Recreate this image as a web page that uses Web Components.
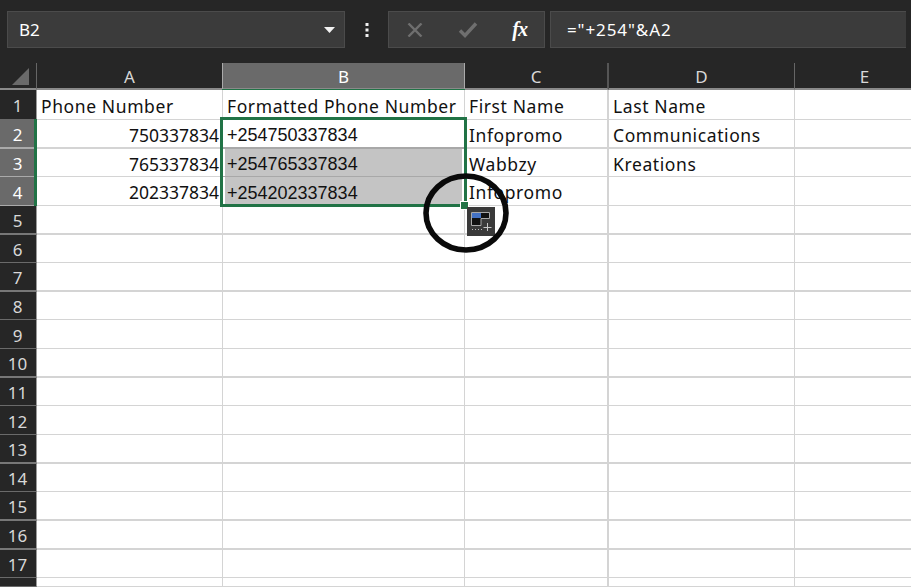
<!DOCTYPE html>
<html>
<head>
<meta charset="utf-8">
<style>
html, body { margin: 0; height: 100%; overflow: hidden; background: #262626; }
body { display: flex; flex-direction: column; width: 911px; height: 587px; }
</style>
</head>
<body>
<xl-formula-bar cell="B2" formula='="+254"&amp;A2'></xl-formula-bar>
<xl-sheet></xl-sheet>
<script>
class XlFormulaBar extends HTMLElement {
    static get localStyles() {
        return `
        <style>
        :host {
            display: grid;
            grid-template-columns: 338px 43px 157px 361px;
            height: 63px;
            box-sizing: border-box;
            padding: 11px 0 15px 7px;
            background: #262626;
            color: #fff;
            font: 17px "Noto Sans", sans-serif;
        }
        .box {
            display: flex;
            align-items: center;
            box-sizing: border-box;
            background: #3b3b3b;
            border: 1px solid #4b4b4b;
        }
        #name { justify-content: space-between; padding: 0 9px 0 11px; }
        #dots { display: flex; align-items: center; justify-content: center; }
        #buttons { justify-content: space-between; padding: 0 17px 0 18px; }
        #input { margin-left: 5px; padding-left: 16px; border-right: 0; letter-spacing: .9px; }
        #fx { font: italic bold 20px "Liberation Serif", serif; letter-spacing: -1px; }
        svg { display: block; }
        </style>
        `;
    }

    static get html() {
        return `
        <div id="name" class="box">
            <span id="cell"></span>
            <svg width="11" height="6" viewBox="0 0 11 6"><path d="M0 0h11L5.500 6z" fill="#f2f2f2"/></svg>
        </div>
        <div id="dots">
            <svg width="4" height="14" viewBox="0 0 4 14" fill="#f0f0f0"><rect width="3" height="3" x="0.500" y="0"/><rect width="3" height="3" x="0.500" y="5.500"/><rect width="3" height="3" x="0.500" y="11"/></svg>
        </div>
        <div id="buttons" class="box">
            <svg width="16" height="14" viewBox="0 0 16 14" fill="none" stroke="#6f6f6f" stroke-width="2.400"><path d="M1.500 .5l13 13M14.500 .5l-13 13"/></svg>
            <svg width="20" height="16" viewBox="0 0 20 16" fill="none" stroke="#6f6f6f" stroke-width="3.400"><path d="M2 8.500l5 5L18 1.500"/></svg>
            <span id="fx">fx</span>
        </div>
        <div id="input" class="box"><span id="formula"></span></div>
        `;
    }

    constructor() {
        super();
        const template = document.createElement('template');
        template.innerHTML = this.constructor.localStyles
            + this.constructor.html;
        this.attachShadow({ mode: 'open' });
        this.shadowRoot.appendChild(template.content.cloneNode(true));
    }

    connectedCallback() {
        this.shadowRoot.querySelector('#cell').textContent = this.getAttribute('cell');
        this.shadowRoot.querySelector('#formula').textContent = this.getAttribute('formula');
    }
}

class XlSheet extends HTMLElement {
    static get localStyles() {
        return `
        <style>
        :host {
            display: block;
            position: relative;
            flex: 1;
            overflow: hidden;
            background: #fff;
            font: 17.500px "Noto Sans", sans-serif;
            letter-spacing: .6px;
            color: #111;
        }
        #grid {
            display: grid;
            grid-template-columns: 37px 186px 242px 144px 186px 140px;
        }
        .head, .row-head {
            display: flex;
            align-items: center;
            justify-content: center;
            box-sizing: border-box;
            background: #262626;
            color: #d8d8d8;
            font-size: 17px;
            letter-spacing: 0;
        }
        .head { height: 27px; border-right: 1px solid #666; border-bottom: 2px solid #8a8a8a; padding-top: 2px; }
        .head.lit { border-right-color: #aaa; }
        .head.wide { border-right: 2px solid #555; }
        .row-head { border-bottom: 1px solid #6a6a6a; border-right: 1px solid #9a9a9a; padding: 2px 1px 0 0; }
        .on { background: #6a6a6a; color: #fff; }
        .cell {
            box-sizing: border-box;
            display: flex;
            align-items: center;
            padding: 2px 3px 0 4px;
            white-space: nowrap;
            overflow: visible;
            border-right: 1px solid #d4d4d4;
            border-bottom: 1px solid #d4d4d4;
        }
        .thick { border-bottom-width: 2px; }
        .row-head.thick { border-bottom-color: #777; }
        .row-head.on { border-bottom-color: #aaa; }
        .wide { border-right-width: 2px; }
        .num { justify-content: flex-end; letter-spacing: 0; }
        .f { font: 18px "Liberation Sans", sans-serif; letter-spacing: 0; padding-top: 4px; }
        .fill {
            background: linear-gradient(#c4c4c4, #c4c4c4) 2px 0 / 237px 100% no-repeat;
            border-bottom-color: #a8a8a8;
        }
        .under { border-bottom-color: #a8a8a8; }
        #selection {
            position: absolute;
            left: 220px;
            top: 54px;
            width: 247px;
            height: 90px;
            box-sizing: border-box;
            border: 3px solid #217346;
            pointer-events: none;
        }
        #row-mark {
            position: absolute;
            left: 34px;
            top: 56px;
            width: 3px;
            height: 87px;
            background: #217346;
        }
        #col-mark {
            position: absolute;
            left: 222px;
            top: 26px;
            width: 243px;
            height: 1px;
            background: #217346;
        }
        #handle {
            position: absolute;
            left: 460px;
            top: 138px;
            width: 9px;
            height: 9px;
            box-sizing: border-box;
            background: #217346;
            border: 1px solid #fff;
        }
        #quick {
            position: absolute;
            left: 467px;
            top: 144px;
            width: 28px;
            height: 29px;
        }
        #ring {
            position: absolute;
            left: 423px;
            top: 110px;
            width: 86px;
            height: 80px;
        }
        svg { display: block; }
        </style>
        `;
    }

    static get html() {
        return `
        <div id="grid"></div>
        <div id="row-mark"></div>
        <div id="col-mark"></div>
        <div id="selection"></div>
        <div id="handle"></div>
        <svg id="quick" viewBox="0 0 28 29">
            <rect width="28" height="29" fill="#3a3a3a"/>
            <path d="M4.500 5.500h18v6h-8.500v7h-9.500z" fill="#111" stroke="#a8a8a8"/>
            <rect x="5" y="6" width="9" height="5" fill="#4472c4"/>
            <path d="M5 22.500h1M8 22.500h1M11 22.500h1M14 22.500h1" stroke="#bbb"/>
            <path d="M20.500 16v8M16.500 20.500h8" stroke="#c8c8c8"/>
        </svg>
        <svg id="ring" viewBox="0 0 86 80"><ellipse cx="43" cy="40" rx="40" ry="37" fill="none" stroke="#0a0a0a" stroke-width="5.600"/></svg>
        `;
    }

    constructor() {
        super();
        const template = document.createElement('template');
        template.innerHTML = this.constructor.localStyles
            + this.constructor.html;
        this.attachShadow({ mode: 'open' });
        this.shadowRoot.appendChild(template.content.cloneNode(true));
        this.initialize();
    }

    initialize() {
        this.grid = this.shadowRoot.querySelector('#grid');
        this.columns = ['A', 'B', 'C', 'D', 'E'];
        this.heights = [30, 29, 28, 29, 29, 28, 29, 28, 29, 29, 28, 29, 29, 28, 29, 29, 28, 9];
        this.thick = [2, 5, 7, 10, 13, 15, 16];
        this.data = {
            1: ['Phone Number', 'Formatted Phone Number', 'First Name', 'Last Name', ''],
            2: ['750337834', '+254750337834', 'Infopromo', 'Communications', ''],
            3: ['765337834', '+254765337834', 'Wabbzy', 'Kreations', ''],
            4: ['202337834', '+254202337834', 'Infopromo', '', '']
        };
    }

    connectedCallback() {
        this.setup();
    }

    setup() {
        const rows = this.heights.map(h => `${h}px`).join(' ');
        this.grid.style.gridTemplateRows = `27px ${rows}`;
        let out = `<div class="head"><svg width="18" height="18" viewBox="0 0 18 18" style="margin-left:6px"><path d="M17 0v17H0z" fill="#6a6a6a"/></svg></div>`;
        this.columns.forEach(c => {
            let cls = 'head';
            if (c === 'B') cls += ' on';
            if (c === 'A' || c === 'B') cls += ' lit';
            if (c === 'C') cls += ' wide';
            out += `<div class="${cls}">${c}</div>`;
        });
        this.heights.forEach((h, i) => {
            const row = i + 1;
            const cells = this.data[row] || ['', '', '', '', ''];
            const on = row >= 2 && row <= 4;
            const thick = this.thick.includes(row) ? ' thick' : '';
            out += `<div class="row-head${thick}${on ? ' on' : ''}">${row < 18 ? row : ''}</div>`;
            cells.forEach((text, c) => {
                let cls = 'cell' + thick;
                if (c === 2) cls += ' wide';
                if (c === 0 && on) cls += ' num';
                if (c === 1 && on) cls += ' f';
                if (c === 1 && row > 2 && on) cls += ' fill';
                if (c === 1 && row === 2) cls += ' under';
                out += `<div class="${cls}">${text}</div>`;
            });
        });
        this.grid.innerHTML = out;
    }
}

customElements.define('xl-formula-bar', XlFormulaBar);
customElements.define('xl-sheet', XlSheet);
</script>
</body>
</html>
